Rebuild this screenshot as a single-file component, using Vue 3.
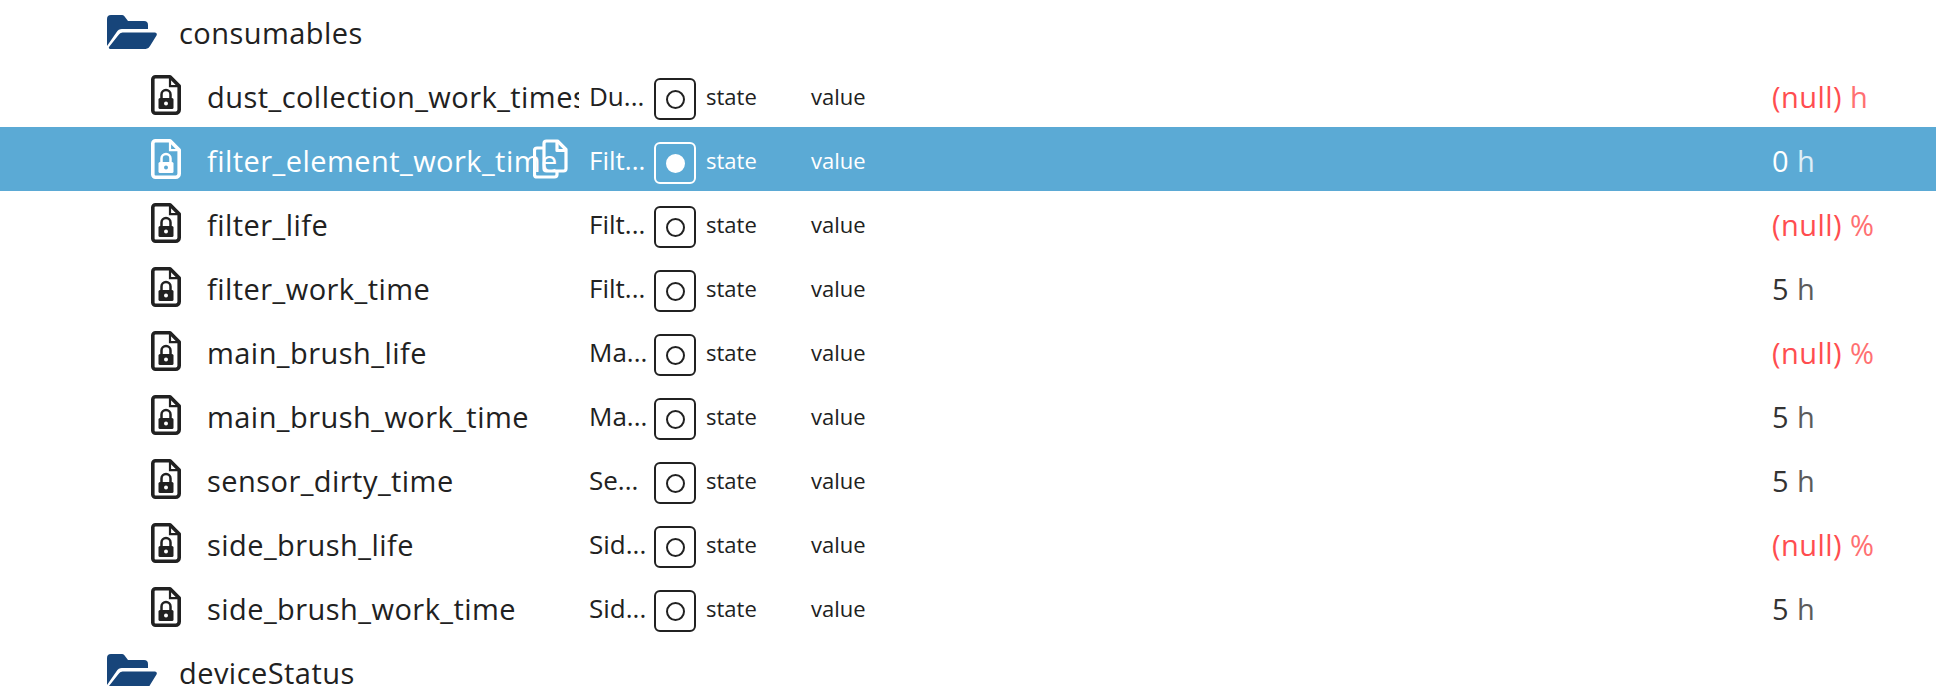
<script setup>
const rows = [
  { name: 'dust_collection_work_times', desc: 'Du...', value: '(null)', unit: 'h', bad: true },
  { name: 'filter_element_work_time', desc: 'Filt...', value: '0', unit: 'h', selected: true },
  { name: 'filter_life', desc: 'Filt...', value: '(null)', unit: '%', bad: true },
  { name: 'filter_work_time', desc: 'Filt...', value: '5', unit: 'h' },
  { name: 'main_brush_life', desc: 'Ma...', value: '(null)', unit: '%', bad: true },
  { name: 'main_brush_work_time', desc: 'Ma...', value: '5', unit: 'h' },
  { name: 'sensor_dirty_time', desc: 'Se...', value: '5', unit: 'h' },
  { name: 'side_brush_life', desc: 'Sid...', value: '(null)', unit: '%', bad: true },
  { name: 'side_brush_work_time', desc: 'Sid...', value: '5', unit: 'h' },
]
</script>

<template>
  <div class="tree">
    <div class="folder first">
      <svg class="folder-icon" viewBox="0 0 50 34" width="50" height="34">
        <path d="M0 4a4 4 0 0 1 4-4h11a3 3 0 0 1 2.200 1L21 6h16a4 4 0 0 1 4 4v4H15a6 6 0 0 0-5.300 3L0 31Z" />
        <path d="M3 34a1.500 1.500 0 0 1-1-2L11.500 20a5 5 0 0 1 4-2.500H47.500a2 2 0 0 1 2 3L43 31a5 5 0 0 1-4.300 3Z" />
      </svg>
      <span class="folder-name">consumables</span>
    </div>
    <div v-for="r in rows" :key="r.name" class="row" :class="{ selected: r.selected }">
      <svg class="file-icon" viewBox="0 0 30 40" width="30" height="40">
        <path class="outline" d="M4.500 1.800h14.500l9.200 9.200v23.700a3.500 3.500 0 0 1-3.500 3.500H4.500a2.700 2.700 0 0 1-2.700-2.700V4.500a2.700 2.700 0 0 1 2.700-2.700Z" />
        <path class="fold" d="M19 2v9.200h9" />
        <path class="lock-arc" d="M10.500 24v-4.500a4.500 4.500 0 0 1 9 0V24" />
        <rect class="lock-body" x="7.500" y="23" width="15" height="11" rx="1.500" />
        <circle class="lock-hole" cx="15" cy="28.500" r="2" />
      </svg>
      <span class="name">{{ r.name }}</span>
      <svg v-if="r.selected" class="copy-icon" viewBox="0 0 36 40" width="36" height="40">
        <path d="M10 9H4a2.500 2.500 0 0 0-2.500 2.500v24A2.500 2.500 0 0 0 4 38h17.500A2.500 2.500 0 0 0 24 35.500V31" />
        <path d="M13.500 2h11L33 10.500v19A2.500 2.500 0 0 1 30.500 32h-17A2.500 2.500 0 0 1 11 29.500v-25A2.500 2.500 0 0 1 13.500 2Z" />
        <path d="M24 2.500v9h9" />
      </svg>
      <span class="desc">{{ r.desc }}</span>
      <span class="check"><i class="dot" /></span>
      <span class="type">state</span>
      <span class="role">value</span>
      <span class="val" :class="{ bad: r.bad }">{{ r.value }} <span class="unit">{{ r.unit }}</span></span>
    </div>
    <div class="folder">
      <svg class="folder-icon" viewBox="0 0 50 34" width="50" height="34">
        <path d="M0 4a4 4 0 0 1 4-4h11a3 3 0 0 1 2.200 1L21 6h16a4 4 0 0 1 4 4v4H15a6 6 0 0 0-5.300 3L0 31Z" />
        <path d="M3 34a1.500 1.500 0 0 1-1-2L11.500 20a5 5 0 0 1 4-2.500H47.500a2 2 0 0 1 2 3L43 31a5 5 0 0 1-4.300 3Z" />
      </svg>
      <span class="folder-name">deviceStatus</span>
    </div>
  </div>
</template>

<style>
html, body { margin: 0; background: #fff; overflow: hidden; }
</style>

<style scoped>
.tree {
  width: 1936px;
  height: 686px;
  overflow: hidden;
  font-family: "Open Sans", "Noto Sans", sans-serif;
  color: #212121;
}
.folder {
  height: 64px;
  display: flex;
  align-items: center;
  padding-left: 107px;
  box-sizing: border-box;
}
.folder.first { height: 63px; }
.folder-icon { fill: #17457a; flex: none; }
.folder-name {
  margin-left: 22px;
  padding-top: 2px;
  font-size: 29px;
  letter-spacing: 0.45px;
}
.row {
  position: relative;
  height: 64px;
  display: flex;
  align-items: center;
  padding-left: 151px;
  box-sizing: border-box;
}
.row.selected { background: #5baad5; color: #fff; }
.file-icon { flex: none; }
.outline { fill: none; stroke: #212121; stroke-width: 3.6; stroke-linejoin: round; }
.fold { fill: none; stroke: #212121; stroke-width: 2.200; }
.lock-arc { fill: none; stroke: #212121; stroke-width: 2.500; }
.lock-body { fill: #212121; }
.lock-hole { fill: #fff; }
.selected .outline, .selected .fold, .selected .lock-arc { stroke: #fff; }
.selected .lock-body { fill: #fff; }
.selected .lock-hole { fill: #5baad5; }
.name {
  margin-left: 26px;
  padding-top: 2px;
  width: 372px;
  flex: none;
  overflow: hidden;
  white-space: nowrap;
  font-size: 29px;
  letter-spacing: 0.45px;
}
.copy-icon {
  position: absolute;
  left: 533px;
  top: 12px;
  fill: none;
  stroke: #fff;
  stroke-width: 3.200;
  stroke-linejoin: round;
}
.desc {
  margin-left: 10px;
  padding-top: 1px;
  width: 65px;
  flex: none;
  font-size: 26px;
  white-space: nowrap;
}
.check {
  width: 42px;
  height: 42px;
  margin-top: 8px;
  box-sizing: border-box;
  border: 2.500px solid #212121;
  border-radius: 6px;
  flex: none;
  display: flex;
  align-items: center;
  justify-content: center;
}
.selected .check { border-color: #fff; }
.dot {
  width: 19px;
  height: 19px;
  box-sizing: border-box;
  border: 2.500px solid #212121;
  border-radius: 50%;
}
.selected .dot { background: #fff; border-color: #fff; }
.type {
  margin-left: 10px;
  padding-top: 2px;
  width: 105px;
  flex: none;
  font-size: 22px;
}
.role {
  padding-top: 2px;
  width: 600px;
  flex: none;
  font-size: 22px;
}
.val {
  position: absolute;
  left: 1772px;
  padding-top: 2px;
  font-size: 29px;
  letter-spacing: 0.45px;
  color: #333;
  white-space: nowrap;
}
.selected .val { color: #fff; }
.val.bad { color: #ff4d4f; }
.unit { opacity: 0.8; }
</style>
